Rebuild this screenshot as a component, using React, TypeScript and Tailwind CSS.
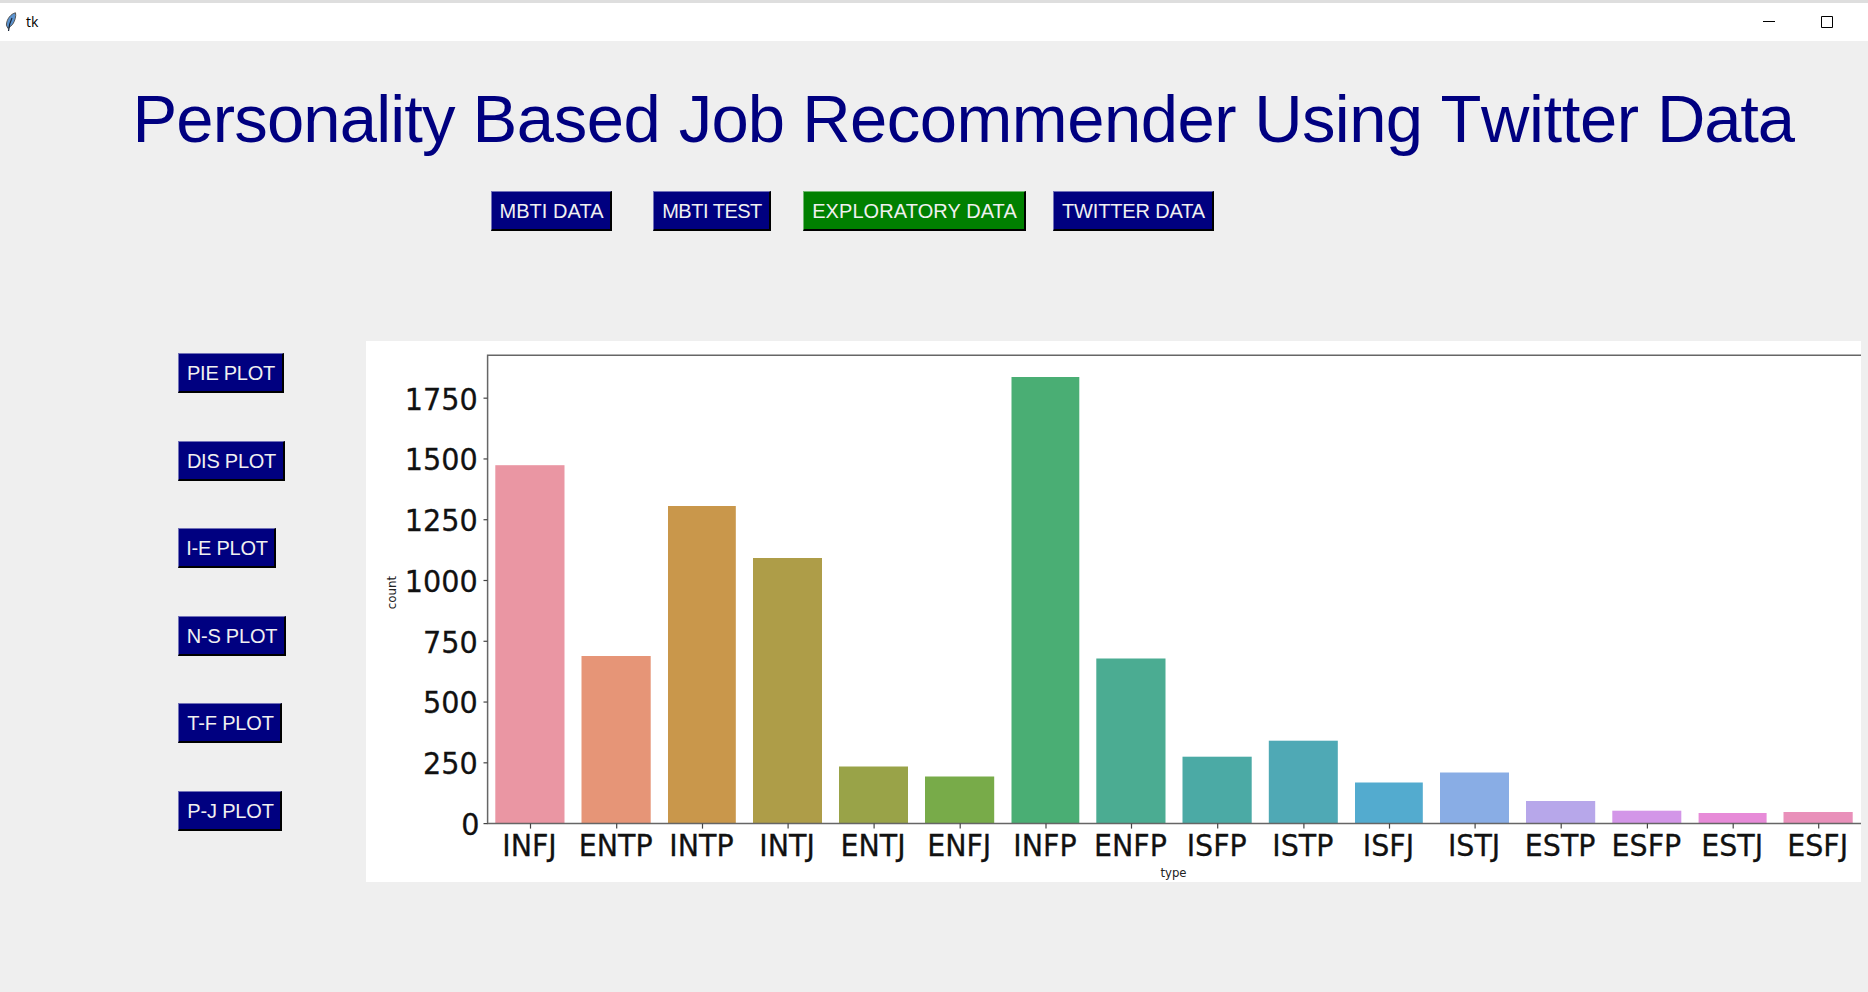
type Tab = { label: string; box: string; track: string; active?: boolean };

const titleWords = [
  { text: "Personality ", track: "tracking-[-0.84px]" },
  { text: "Based ", track: "tracking-[-0.4px]" },
  { text: "Job ", track: "tracking-[-0.8px]" },
  { text: "Recommender ", track: "tracking-[-0.5px]" },
  { text: "Using ", track: "tracking-[-0.6px]" },
  { text: "Twitter ", track: "tracking-[-0.4px] [font-kerning:none]" },
  { text: "Data", track: "tracking-[-1.1px]" },
];

const tabs: Tab[] = [
  { label: "MBTI DATA", box: "w-[121px] pl-px", track: "tracking-[0.05px]" },
  { label: "MBTI TEST", box: "ml-[41px] w-[118px] pl-px", track: "tracking-[-0.5px]" },
  { label: "EXPLORATORY DATA", box: "ml-[32px] w-[223px] pl-px", track: "tracking-[0.08px]", active: true },
  { label: "TWITTER DATA", box: "ml-[27px] w-[161px] pl-px", track: "tracking-[-0.15px]" },
];

const plots: Tab[] = [
  { label: "PIE PLOT", box: "w-[106px] pl-px pt-px", track: "tracking-[-0.25px]" },
  { label: "DIS PLOT", box: "w-[107px] pl-px pt-px", track: "tracking-[-0.25px]" },
  { label: "I-E PLOT", box: "w-[98px] pl-px pt-px", track: "tracking-[-0.2px]" },
  { label: "N-S PLOT", box: "w-[108px] pl-px pt-px", track: "tracking-[-0.2px]" },
  { label: "T-F PLOT", box: "w-[104px] pl-[2px] pt-px", track: "tracking-[-0.15px]" },
  { label: "P-J PLOT", box: "w-[104px] pl-[2px] pt-px", track: "tracking-[-0.15px]" },
];

// Chart coordinates are relative to the white figure (1495 x 541).
const bars = [
  { type: "INFJ", x: 129.3, w: 69.2, top: 124.2, fill: "#ea96a3" },
  { type: "ENTP", x: 215.5, w: 69.2, top: 315, fill: "#e69577" },
  { type: "INTP", x: 302, w: 67.8, top: 165, fill: "#c9974b" },
  { type: "INTJ", x: 387, w: 69, top: 217, fill: "#ae9d48" },
  { type: "ENTJ", x: 473, w: 69, top: 425.5, fill: "#99a348" },
  { type: "ENFJ", x: 559, w: 69.2, top: 435.5, fill: "#78ab49" },
  { type: "INFP", x: 645.5, w: 67.8, top: 36, fill: "#4aae74" },
  { type: "ENFP", x: 730.3, w: 69.2, top: 317.5, fill: "#4bac92" },
  { type: "ISFP", x: 816.5, w: 69.2, top: 415.7, fill: "#4baaa5" },
  { type: "ISTP", x: 902.8, w: 69, top: 399.7, fill: "#4fa9b5" },
  { type: "ISFJ", x: 989, w: 67.8, top: 441.5, fill: "#53abcf" },
  { type: "ISTJ", x: 1074, w: 69, top: 431.5, fill: "#89ade5" },
  { type: "ESTP", x: 1160, w: 69.2, top: 460, fill: "#b7a7ea" },
  { type: "ESFP", x: 1246.3, w: 69, top: 469.7, fill: "#d396e8" },
  { type: "ESTJ", x: 1332.6, w: 68, top: 472, fill: "#e78bd8" },
  { type: "ESFJ", x: 1417.5, w: 69.2, top: 471, fill: "#e990ba" },
];

const yTicks = [1750, 1500, 1250, 1000, 750, 500, 250, 0];

function TkButton({ label, box, track, active }: Tab) {
  const tone = active
    ? "bg-[#008000] border-t-[#6fb86f] border-l-[#6fb86f]"
    : "bg-[#000080] border-t-[#7272b8] border-l-[#7272b8]";
  return (
    <button
      className={`flex h-10 shrink-0 items-center justify-center whitespace-nowrap border border-b-2 border-r-2 border-b-black border-r-black text-[20px] leading-none text-[#f0f0f0] ${tone} ${box} ${track}`}
    >
      {label}
    </button>
  );
}

function CountPlot() {
  const base = 482.6;
  return (
    <svg className="block h-[541px] w-[1495px]" viewBox="0 0 1495 541" fontFamily="'DejaVu Sans', sans-serif" fill="#111">
      <rect width="1495" height="541" fill="#fff" />
      {bars.map((b) => (
        <rect key={b.type} x={b.x} y={b.top} width={b.w} height={base - b.top} fill={b.fill} />
      ))}
      <path d={`M1495 14.2H121.6V${base}H1495`} fill="none" stroke="#666" strokeWidth="1.5" />
      {yTicks.map((v) => {
        const y = base - v * 0.2431;
        return (
          <g key={v}>
            <path d={`M117.5 ${y}h4`} stroke="#444" strokeWidth="1.2" />
            <text
              transform={`translate(${v === 0 ? 113.4 : 111.8} ${y + 11.4}) scale(0.925 1)`}
              textAnchor="end"
              fontSize="31"
              stroke="#111"
              strokeWidth="0.3"
            >
              {v}
            </text>
          </g>
        );
      })}
      {bars.map((b) => {
        const c = b.x + b.w / 2 + 0.6;
        return (
          <g key={b.type}>
            <path d={`M${c} ${base}v5`} stroke="#444" strokeWidth="1.2" />
            <text
              transform={`translate(${c - 1} 515) scale(0.92 1)`}
              textAnchor="middle"
              fontSize="31"
              stroke="#111"
              strokeWidth="0.3"
            >
              {b.type}
            </text>
          </g>
        );
      })}
      <text transform="translate(30 251.5) rotate(-90) scale(0.95 1)" textAnchor="middle" fontSize="12.5" fill="#222">
        count
      </text>
      <text transform="translate(807.5 536) scale(0.9 1)" textAnchor="middle" fontSize="13" fill="#222">
        type
      </text>
    </svg>
  );
}

export default function App() {
  return (
    <div className="flex h-[992px] w-[1868px] flex-col overflow-hidden bg-[#efefef] font-['Liberation_Sans',Arial,sans-serif]">
      <header className="flex h-[41px] shrink-0 items-center border-t-[3px] border-[#dedede] bg-white pl-[5px]">
        <svg className="h-5 w-3" viewBox="0 0 12 20">
          <path d="M10.5 .8C6 1.8 1.5 7 1.4 13.2L3 16.5 7.5 12.5C10 9 11.3 4 10.5 .8Z" fill="#5b93cf" stroke="#555" strokeWidth="1" />
          <path d="M7 6C5.5 9 4 13 3.5 19" fill="none" stroke="#182436" strokeWidth="1.2" />
        </svg>
        <span className="ml-[9px] font-['Open_Sans',sans-serif] text-[14px] leading-none text-black">tk</span>
        <svg className="ml-auto mr-[34px] h-3 w-[71px]" viewBox="0 0 71 12" fill="none" stroke="#000">
          <path d="M0 5.5h12M58.5 .5h11v11h-11z" />
        </svg>
      </header>
      <main className="flex flex-1 flex-col">
        <h1 className="ml-[132.5px] mt-[38px] h-[80px] whitespace-pre text-[67px] leading-[80px] text-[#000080]">
          {titleWords.map((w) => (
            <span key={w.text} className={w.track}>
              {w.text}
            </span>
          ))}
        </h1>
        <nav className="ml-[491px] mt-8 flex">
          {tabs.map((t) => (
            <TkButton key={t.label} {...t} />
          ))}
        </nav>
        <section className="mt-[110px] flex">
          <aside className="ml-[178px] flex w-[188px] flex-col items-start gap-[47.5px] pt-[12.4px]">
            {plots.map((p) => (
              <TkButton key={p.label} {...p} />
            ))}
          </aside>
          <CountPlot />
        </section>
      </main>
    </div>
  );
}
